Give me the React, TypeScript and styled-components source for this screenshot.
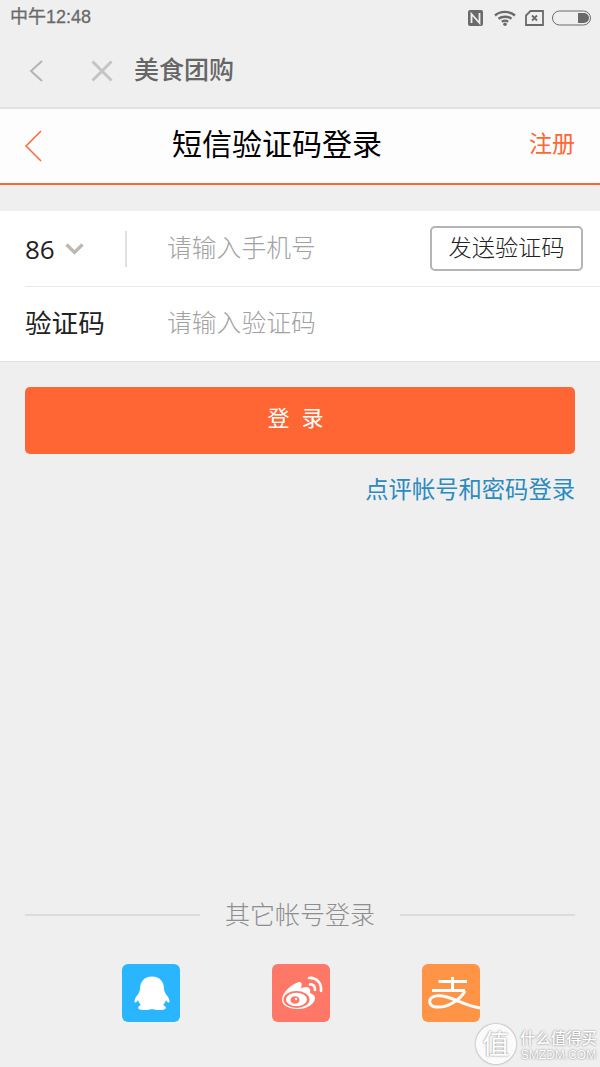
import React from "react";
import styled, { createGlobalStyle } from "styled-components";

const Global = createGlobalStyle`
  html, body { margin: 0; padding: 0; background: #efefef; }
  * { box-sizing: border-box; }
  #root { width: 600px; height: 1067px; overflow: hidden; }
`;

const Page = styled.div`
  position: relative;
  width: 600px;
  height: 1067px;
  background: #efefef;
  font-family: "Noto Sans CJK SC", "Noto Sans", sans-serif;
  font-weight: 300;
  display: flex;
  flex-direction: column;
`;

const StatusBar = styled.div`
  height: 35px;
  padding: 0 8px 0 10px;
  display: flex;
  align-items: center;
  justify-content: space-between;
`;
const Clock = styled.span`
  font-family: "Liberation Sans", "Noto Sans CJK SC", sans-serif;
  font-size: 18px;
  font-weight: 400;
  -webkit-text-stroke: 0.3px #6a6a6a;
  color: #6a6a6a;
  line-height: 35px;
`;
const StatusIcons = styled.div`
  display: flex;
  align-items: center;
  gap: 8px;
`;

const BrowserBar = styled.div`
  height: 74px;
  padding: 0 0 0 29px;
  display: flex;
  align-items: center;
  border-bottom: 2px solid #e2e2e2;
`;
const BrowserTitle = styled.span`
  margin-left: 21px;
  padding-bottom: 5px;
  font-size: 25px;
  font-weight: 500;
  color: #666;
  line-height: 1;
`;
const CloseIcon = styled.svg`
  margin-left: 48px;
`;

const Header = styled.div`
  height: 76px;
  background: #fdfdfd;
  border-bottom: 2px solid #ff6633;
  padding: 0 25px;
  display: flex;
  align-items: center;
`;
const HeaderTitle = styled.span`
  margin-left: 130px;
  flex: 1;
  padding-bottom: 8px;
  font-size: 30px;
  font-weight: 400;
  color: #000;
  line-height: 1;
`;
const HeaderLink = styled.span`
  padding-bottom: 8px;
  font-size: 23px;
  font-weight: 400;
  color: #ff6633;
  line-height: 1;
`;

const Form = styled.div`
  margin-top: 26px;
  background: #fff;
  border-bottom: 1px solid #e2e2e2;
`;
const Row = styled.div<{ $divider?: boolean }>`
  height: ${(p) => (p.$divider ? 76 : 74)}px;
  margin-left: 25px;
  padding-right: 17px;
  display: flex;
  align-items: center;
  border-bottom: ${(p) => (p.$divider ? "1px solid #e8e8e8" : "none")};
`;
const Code = styled.div`
  width: 102px;
  height: 36px;
  display: flex;
  align-items: center;
  gap: 10px;
  border-right: 2px solid #e0e0e0;
  font-family: "Open Sans", "Noto Sans", sans-serif;
  font-weight: 400;
  font-size: 26px;
  color: #222;
`;
const Label = styled.div`
  width: 102px;
  padding-bottom: 4px;
  font-size: 26.6px;
  font-weight: 400;
  color: #222;
  line-height: 1;
`;
const Placeholder = styled.div`
  flex: 1;
  margin-left: 40px;
  padding-bottom: 5px;
  font-size: 24.8px;
  color: #a2a2a2;
  line-height: 1;
`;
const SendButton = styled.button`
  width: 153px;
  height: 45px;
  padding: 0 0 3px;
  background: #fff;
  border: 2px solid #b4b4b4;
  border-radius: 5px;
  font-family: inherit;
  font-weight: 300;
  font-size: 23.2px;
  color: #222;
  line-height: 1;
`;

const Content = styled.div`
  flex: 1;
  padding: 25px 25px 0;
  display: flex;
  flex-direction: column;
`;
const LoginButton = styled.button`
  height: 67px;
  border: none;
  border-radius: 5px;
  background: #ff6633;
  color: #fff;
  font-family: inherit;
  font-weight: 400;
  font-size: 22px;
  letter-spacing: 12px;
  padding: 0 0 9px 3px;
`;
const AltLink = styled.div`
  margin-top: 19px;
  text-align: right;
  font-size: 23.3px;
  font-weight: 400;
  line-height: 30px;
  color: #2b8ac0;
`;

const OtherHeading = styled.div`
  margin-top: auto;
  display: flex;
  align-items: center;
  gap: 25px;
  &::before, &::after {
    content: "";
    flex: 1;
    height: 2px;
    background: #dcdcdc;
  }
`;
const OtherLabel = styled.span`
  padding-bottom: 4px;
  font-size: 25px;
  line-height: 30px;
  color: #8e8e8e;
`;
const Socials = styled.div`
  margin: 32px 0 45px;
  padding-left: 97px;
  display: flex;
  gap: 92px;
`;
const Social = styled.div<{ $bg: string }>`
  width: 58px;
  height: 58px;
  border-radius: 6px;
  overflow: hidden;
  background: ${(p) => p.$bg};
`;

const Watermark = styled.div`
  position: absolute;
  left: 476px;
  top: 1024px;
  display: flex;
  align-items: center;
  gap: 4px;
  white-space: nowrap;
  color: #fff;
  text-shadow: 0 0 2px rgba(0, 0, 0, 0.55);
`;
const WatermarkText = styled.div`
  display: flex;
  flex-direction: column;
  align-items: center;
`;
const WatermarkCn = styled.span`
  font-size: 15.4px;
  font-weight: 500;
  line-height: 22px;
`;
const WatermarkEn = styled.span`
  font-family: "Liberation Sans", sans-serif;
  font-size: 12px;
  line-height: 15px;
`;
const Seal = styled.div`
  flex: none;
  width: 40px;
  height: 40px;
  border-radius: 50%;
  border: 1.500px solid #fff;
  background: rgba(255, 255, 255, 0.75);
  box-shadow: 0 0 2px rgba(0, 0, 0, 0.5);
  display: flex;
  align-items: center;
  justify-content: center;
  padding-bottom: 3px;
  font-size: 27px;
  font-weight: 400;
  line-height: 1;
  color: #fff;
`;

export default function App() {
  return (
    <Page>
      <Global />
      <StatusBar>
        <Clock>中午12:48</Clock>
        <StatusIcons>
          <svg width="18" height="16" viewBox="0 0 18 16">
            <rect width="15" height="16" rx="2" fill="#6a6a6a" />
            <path d="M3.500 13V4l8 9V3" stroke="#efefef" strokeWidth="1.8" fill="none" />
          </svg>
          <svg width="22" height="16" viewBox="0 0 22 16" fill="none" stroke="#6a6a6a" strokeWidth="2.4">
            <path d="M1 5.500C6.500.7 15.500.7 21 5.500" />
            <path d="M4.500 8.800c3.500-2.800 9.500-2.800 13 0" />
            <path d="M7.800 11.800c1.800-1.300 4.600-1.300 6.400 0" />
            <circle cx="11" cy="14.200" r="1.800" fill="#6a6a6a" stroke="none" />
          </svg>
          <svg width="20" height="16" viewBox="0 0 20 16" fill="none">
            <path d="M2 5.500 6.500 1H19v14H2z" stroke="#6a6a6a" strokeWidth="1.800" />
            <path d="M8 5.500l5 5M13 5.500l-5 5" stroke="#6a6a6a" strokeWidth="1.800" />
          </svg>
          <svg width="40" height="16" viewBox="0 0 40 16">
            <rect x="0.500" y="1" width="38" height="14" rx="7" fill="none" stroke="#6a6a6a" />
            <path d="M26 3h6a5 5 0 0 1 0 10h-6z" fill="#6a6a6a" />
          </svg>
        </StatusIcons>
      </StatusBar>
      <BrowserBar>
        <svg width="14" height="22" viewBox="0 0 14 22" fill="none" stroke="#b4b4b4" strokeWidth="2">
          <path d="M13 1 2 11l11 10" />
        </svg>
        <CloseIcon width="22" height="22" viewBox="0 0 22 22" fill="none" stroke="#c4c4c4" strokeWidth="3">
          <path d="M1.500 1.500l19 19M20.500 1.500l-19 19" />
        </CloseIcon>
        <BrowserTitle>美食团购</BrowserTitle>
      </BrowserBar>
      <Header>
        <svg width="17" height="32" viewBox="0 0 17 32" fill="none" stroke="#ff6633" strokeWidth="1.500">
          <path d="M16 1 1 16l15 15" />
        </svg>
        <HeaderTitle>短信验证码登录</HeaderTitle>
        <HeaderLink>注册</HeaderLink>
      </Header>
      <Form>
        <Row $divider>
          <Code>
            86
            <svg width="19" height="12" viewBox="0 0 19 12" fill="none" stroke="#bdb8ae" strokeWidth="3.200">
              <path d="M1.500 1.500 9.500 9.500l8-8" />
            </svg>
          </Code>
          <Placeholder>请输入手机号</Placeholder>
          <SendButton>发送验证码</SendButton>
        </Row>
        <Row>
          <Label>验证码</Label>
          <Placeholder>请输入验证码</Placeholder>
        </Row>
      </Form>
      <Content>
        <LoginButton>登录</LoginButton>
        <AltLink>点评帐号和密码登录</AltLink>
        <OtherHeading>
          <OtherLabel>其它帐号登录</OtherLabel>
        </OtherHeading>
        <Socials>
          <Social $bg="#29b6ff">
            <svg width="58" height="58" viewBox="0 0 58 58" fill="#fff">
              <path d="M30 12.500C22 12.500 18 18 18 25c0 3-2 5-4 8-1.500 2.200-2 5-1 5.500 1 .3 2.300-1 3-2.500.6 2 1.500 3.700 3 5-2 .8-3.500 2.200-2.500 3.800C18 46.500 26 46.500 30 45c4 1.500 12 1.500 13.500-.2 1-1.600-.5-3-2.500-3.800 1.500-1.300 2.400-3 3-5 .7 1.500 2 2.800 3 2.500 1-.5.500-3.300-1-5.500-2-3-4-5-4-8 0-7-4-12.500-12-12.500z" />
            </svg>
          </Social>
          <Social $bg="#ff7766">
            <svg width="58" height="58" viewBox="0 0 58 58">
              <path d="M27 18c-7 2-17 10-17 18 0 6 8 9 16 9 9 0 17-5 17-11 0-3-3-4-5-5 1-4-1-6-4-6-2 0-4 1-5 1.500 1-4 1-7-2-6.500z" fill="#fff" />
              <ellipse cx="24.500" cy="35.500" rx="13" ry="8.500" fill="#ff7766" />
              <ellipse cx="24.500" cy="35.500" rx="10.500" ry="6.800" fill="#fff" />
              <ellipse cx="23" cy="36" rx="4.500" ry="3.800" fill="#ff7766" />
              <circle cx="24" cy="35" r="1.200" fill="#fff" />
              <path d="M37 14c7-1 13 5 12 13M38 20.500c3-.5 5.500 2 5 5.500" fill="none" stroke="#fff" strokeWidth="2.600" strokeLinecap="round" />
            </svg>
          </Social>
          <Social $bg="#ff9447">
            <svg width="58" height="58" viewBox="0 0 58 58" fill="none" stroke="#fff" strokeWidth="3">
              <path d="M16.500 17.500H45M30.500 13v14M10 26.500h33" />
              <path d="M43 27C38 36 26 44 14 43 9 43 7 39 8 36c2-5 10-5 17-3 10 3 20 9 33 11" />
            </svg>
          </Social>
        </Socials>
      </Content>
      <Watermark>
        <Seal>值</Seal>
        <WatermarkText>
          <WatermarkCn>什么值得买</WatermarkCn>
          <WatermarkEn>SMZDM.COM</WatermarkEn>
        </WatermarkText>
      </Watermark>
    </Page>
  );
}
